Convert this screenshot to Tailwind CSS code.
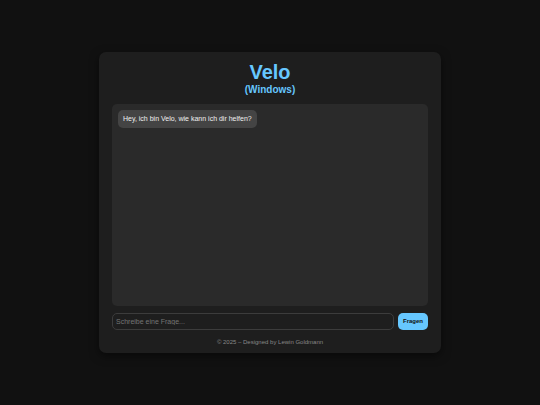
<!DOCTYPE html>
<html lang="de">
<head>
<meta charset="utf-8">
<meta name="viewport" content="width=device-width, initial-scale=1">
<title>Velo (Windows)</title>
<script src="https://cdn.jsdelivr.net/npm/@tailwindcss/browser@4"></script>
</head>
<body class="flex min-h-screen items-center justify-center bg-[#111111] px-6 font-['Liberation_Sans',Arial,sans-serif] text-[#f0f0f0]">
  <main class="flex w-full max-w-[342px] flex-col rounded-[7px] bg-[#1e1e1e] px-[13px] pt-2 pb-[7px] shadow-[0_3px_10px_rgba(0,0,0,0.5)]">
    <h1 class="text-center font-bold text-[#66c7ff]">
      <span class="block text-[20px] leading-6">Velo</span>
      <span class="block text-[10px] leading-3">(Windows)</span>
    </h1>
    <section class="mt-2 flex h-[50vh] flex-col items-start rounded-[5px] bg-[#2a2a2a] p-[6px]" aria-label="Chatverlauf">
      <p class="rounded-[5px] bg-[#444444] px-[5px] py-1 text-[7px] leading-[10px]">Hey, ich bin Velo, wie kann ich dir helfen?</p>
    </section>
    <form class="mt-[7px] flex gap-1">
      <input type="text" aria-label="Frage" placeholder="Schreibe eine Frage..." class="h-[17px] min-w-0 flex-1 rounded-[5px] border border-[#3c3c3c] bg-[#1e1e1e] px-[3px] text-[7px] text-[#f0f0f0] outline-none placeholder:text-[#757575]">
      <button type="button" class="h-[17px] rounded-[5px] bg-[#66c7ff] px-[5px] text-[6px] font-bold text-[#111111]">Fragen</button>
    </form>
    <footer class="mt-2 text-center text-[6px] leading-2 text-[#888888]">© 2025 – Designed by Lewin Goldmann</footer>
  </main>
</body>
</html>
